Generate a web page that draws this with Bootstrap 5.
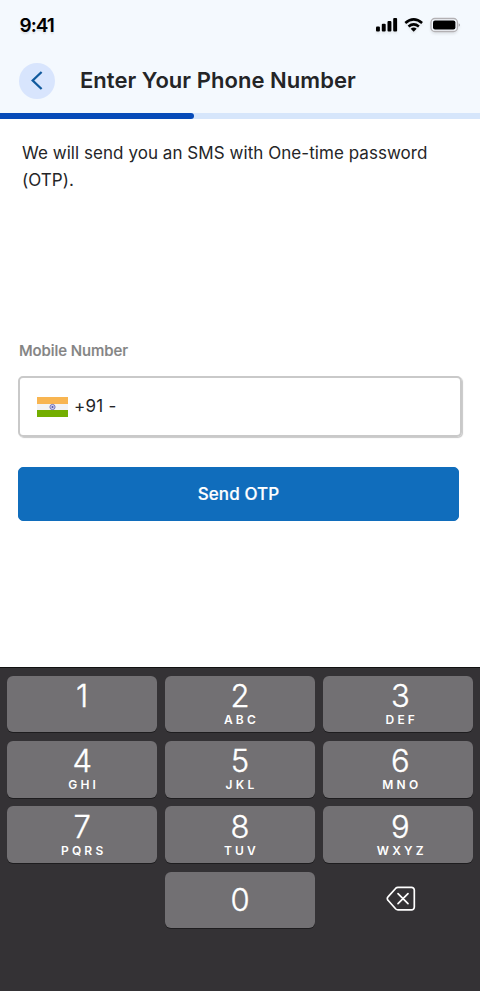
<!DOCTYPE html>
<html lang="en">
<head>
<meta charset="utf-8">
<meta name="viewport" content="width=device-width, initial-scale=1">
<title>Enter Your Phone Number</title>
<link href="https://cdn.jsdelivr.net/npm/bootstrap@5.3.0/dist/css/bootstrap.min.css" rel="stylesheet">
<style>
body{font-family:Inter,"Liberation Sans",sans-serif;color:#242527;height:991px;overflow:hidden}
.top-area{background:#f4f9fe;height:113px}
.status-bar{height:49px;padding:0 20px 0 19.5px}
.clock{font-size:19px;font-weight:600;letter-spacing:-1px;line-height:48px;padding-top:2px;color:#000;text-shadow:0 2px 2px rgba(0,0,0,.1)}
.status-icons{filter:drop-shadow(0 2px 1px rgba(0,0,0,.08))}
.title-bar{height:64px;padding-left:19px;gap:25px}
.back-btn{width:36px;height:36px;background:#d8e5fd;margin-top:-1px}
.page-title{font-size:22px;font-weight:600;line-height:30px;letter-spacing:.04px;margin-top:-2px}
.step-progress{height:6px;background:#d6e6fb;--bs-progress-bar-bg:#064bb9}
.step-progress .progress-bar{border-radius:0 3px 3px 0}
.intro{font-size:17px;line-height:27px;letter-spacing:.05px;padding:21px 22px 0;height:223px}
.phone-form{padding:0 18px}
.field-label{font-size:15px;font-weight:500;line-height:18px;color:#838383;padding-left:1px;-webkit-text-stroke:.2px #838383;letter-spacing:-.08px}
.phone-box{height:61px;margin-top:16px;padding-left:17px;border:2px solid #c9c9c9;border-radius:5px;box-shadow:1px 1px 1px rgba(0,0,0,.22);font-size:17px;gap:6px}
.dial-code{letter-spacing:.25px;padding-top:1px}
.send-btn{height:54px;margin:30px 3px 0 0;padding-top:8px;font-size:17px;font-weight:500;letter-spacing:.12px;border-radius:5px;--bs-btn-bg:#106dbc;--bs-btn-border-color:#106dbc;-webkit-text-stroke:.2px #fff}
.keypad{height:324px;background:#343235;border-top:1px solid #111;padding:8px 7px 0}
.key-grid{display:grid;grid-template-columns:repeat(3,1fr);grid-template-rows:56px 57px 57px 56px;gap:8.7px 7.5px}
.key{border:0;border-radius:6px;background:#727073;color:#fff;box-shadow:0 1px 0 #1e1d1f;padding:3px 0 0}
.key-row-mid{padding-top:3.5px}
.key-row-lower{padding-top:4px}
.key-zero{padding-top:0}
.key-right{padding-left:5px}
.digit{font-size:31px;line-height:34px;font-weight:300;-webkit-text-stroke:.35px #fff}
.letters{font-size:12px;line-height:13px;font-weight:600;letter-spacing:3.2px;padding-left:3px}
.key-delete{border:0;background:none;box-shadow:none;padding:0 0 2px 6px}
</style>
</head>
<body class="d-flex flex-column bg-white">
<header class="top-area flex-shrink-0">
  <div class="status-bar d-flex justify-content-between align-items-center">
    <span class="clock">9:41</span>
    <svg class="status-icons" width="85" height="16" viewBox="375 16.5 85 16">
      <g fill="#000"><rect x="376" y="26" width="3.9" height="5" rx="1"/><rect x="381.8" y="23.3" width="3.9" height="7.7" rx="1"/><rect x="387.5" y="20.5" width="3.9" height="10.5" rx="1"/><rect x="393.2" y="17.5" width="3.9" height="13.5" rx="1"/></g>
      <g fill="none" stroke="#000" stroke-width="2.6"><path d="M405.3 22.4Q413.7 15.4 422.1 22.4M408.5 26Q413.7 21.7 418.9 26"/></g>
      <path d="M410.7 28.2Q413.7 25.7 416.7 28.2L413.7 31.2Z"/>
      <rect x="431" y="18" width="26.4" height="13" rx="3.8" fill="#f4f9fe" stroke="#b3b1b4" stroke-width="1.3"/>
      <rect x="433" y="20" width="22.4" height="9" rx="2"/><path d="M458.7 22.7q1.3.5 1.3 1.8t-1.3 1.8z" fill="#a6a6a8"/>
    </svg>
  </div>
  <div class="title-bar d-flex align-items-center">
    <button class="back-btn btn rounded-circle border-0 p-0 d-flex flex-shrink-0" aria-label="Back"><svg width="36" height="36" viewBox="0 0 36 36" fill="none" stroke="#115a9d" stroke-width="2.3"><path d="M22.6 9 13.7 17.5 22.6 26"/></svg></button>
    <h1 class="page-title mb-0">Enter Your Phone Number</h1>
  </div>
</header>
<div class="progress step-progress rounded-0 flex-shrink-0"><div class="progress-bar" style="width:40.4%"></div></div>
<main class="flex-grow-1">
  <p class="intro mb-0">We will send you an SMS with One-time password (OTP).</p>
  <form class="d-flex flex-column phone-form">
    <label class="field-label">Mobile Number</label>
    <div class="phone-box d-flex align-items-center">
      <svg width="31" height="20" viewBox="0 0 31 20"><path fill="#f8b551" d="M0 0h31v7H0z"/><path fill="#f3f3f4" d="M0 7h31v6H0z"/><path fill="#73ae00" d="M0 13h31v7H0z"/><circle cx="15.5" cy="10" r="2.6" fill="#d0d0ec" stroke="#7777b8"/><circle cx="15.5" cy="10" r="1" fill="#5555a8"/></svg>
      <span class="dial-code">+91 -</span>
    </div>
    <button type="button" class="send-btn btn btn-primary">Send OTP</button>
  </form>
</main>
<section class="keypad flex-shrink-0">
  <div class="key-grid">
    <button class="key d-flex flex-column align-items-center"><span class="digit">1</span></button>
    <button class="key d-flex flex-column align-items-center"><span class="digit">2</span><span class="letters">ABC</span></button>
    <button class="key key-right d-flex flex-column align-items-center"><span class="digit">3</span><span class="letters">DEF</span></button>
    <button class="key key-row-mid d-flex flex-column align-items-center"><span class="digit">4</span><span class="letters">GHI</span></button>
    <button class="key key-row-mid d-flex flex-column align-items-center"><span class="digit">5</span><span class="letters">JKL</span></button>
    <button class="key key-right key-row-mid d-flex flex-column align-items-center"><span class="digit">6</span><span class="letters">MNO</span></button>
    <button class="key key-row-lower d-flex flex-column align-items-center"><span class="digit">7</span><span class="letters">PQRS</span></button>
    <button class="key key-row-lower d-flex flex-column align-items-center"><span class="digit">8</span><span class="letters">TUV</span></button>
    <button class="key key-right key-row-lower d-flex flex-column align-items-center"><span class="digit">9</span><span class="letters">WXYZ</span></button>
    <span></span>
    <button class="key key-zero d-flex align-items-center justify-content-center"><span class="digit">0</span></button>
    <button class="key-delete d-flex align-items-center justify-content-center" aria-label="Delete"><svg width="30" height="26" viewBox="0 0 30 26" fill="none" stroke="#fff" stroke-width="1.7" stroke-linejoin="round" stroke-linecap="round"><path d="M12 1.3h13.5a2.8 2.8 0 0 1 2.8 2.8v17a2.8 2.8 0 0 1-2.8 2.8H12a3 3 0 0 1-2.2-.9L2 14.3a2.4 2.4 0 0 1 0-3.4L9.8 2.2A3 3 0 0 1 12 1.3ZM12 7.7l10 10M22 7.7l-10 10"/></svg></button>
  </div>
</section>
<script src="https://cdn.jsdelivr.net/npm/bootstrap@5.3.0/dist/js/bootstrap.bundle.min.js"></script>
</body>
</html>
